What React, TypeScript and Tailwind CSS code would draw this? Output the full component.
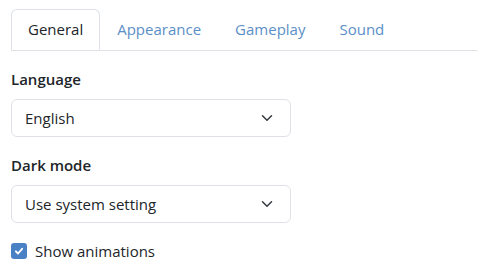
import React from 'react';

const tabs = ['General', 'Appearance', 'Gameplay', 'Sound'];

const Chevron = () => (
  <svg width="12" height="12" viewBox="0 0 16 16" fill="none" stroke="#343a40" strokeWidth="2" strokeLinecap="round" strokeLinejoin="round">
    <path d="M2 5l6 6 6-6" />
  </svg>
);

const SelectBox = ({ value }: { value: string }) => (
  <div className="w-[280px] h-[38px] border border-[#dee2e6] rounded-md flex items-center justify-between pl-[13px] pr-[17px] text-[15px] text-[#212529]">
    <span>{value}</span>
    <Chevron />
  </div>
);

export default function App() {
  return (
    <div className="w-[487px] h-[280px] bg-white px-[11px] pt-[9px]" style={{ fontFamily: '"Open Sans", "Noto Sans", sans-serif' }}>
      {/* tabs */}
      <div className="flex border-b border-[#dee2e6] w-[466px]">
        {tabs.map((t, i) => (
          <div
            key={t}
            className={
              i === 0
                ? 'h-[41px] px-[16px] flex items-center text-[15px] text-[#212529] border border-[#dee2e6] border-b-white -mb-px rounded-t-md bg-white'
                : 'h-[41px] px-[17px] flex items-center text-[15px] text-[#5b8fc7]'
            }
          >
            {t}
          </div>
        ))}
      </div>

      <div className="mt-[18px] text-[15px] font-semibold text-[#212529] leading-5">Language</div>
      <div className="mt-[10px]">
        <SelectBox value="English" />
      </div>

      <div className="mt-[18px] text-[15px] font-semibold text-[#212529] leading-5">Dark mode</div>
      <div className="mt-[10px]">
        <SelectBox value="Use system setting" />
      </div>

      <label className="mt-[17px] flex items-center gap-[8px] text-[15px] text-[#212529]">
        <span className="w-[16px] h-[16px] rounded-[3px] bg-[#4a80c4] flex items-center justify-center">
          <svg width="10" height="10" viewBox="0 0 16 16" fill="none" stroke="white" strokeWidth="3" strokeLinecap="round" strokeLinejoin="round">
            <path d="M3 8.5l3.5 3.5L13 4.5" />
          </svg>
        </span>
        Show animations
      </label>
    </div>
  );
}
